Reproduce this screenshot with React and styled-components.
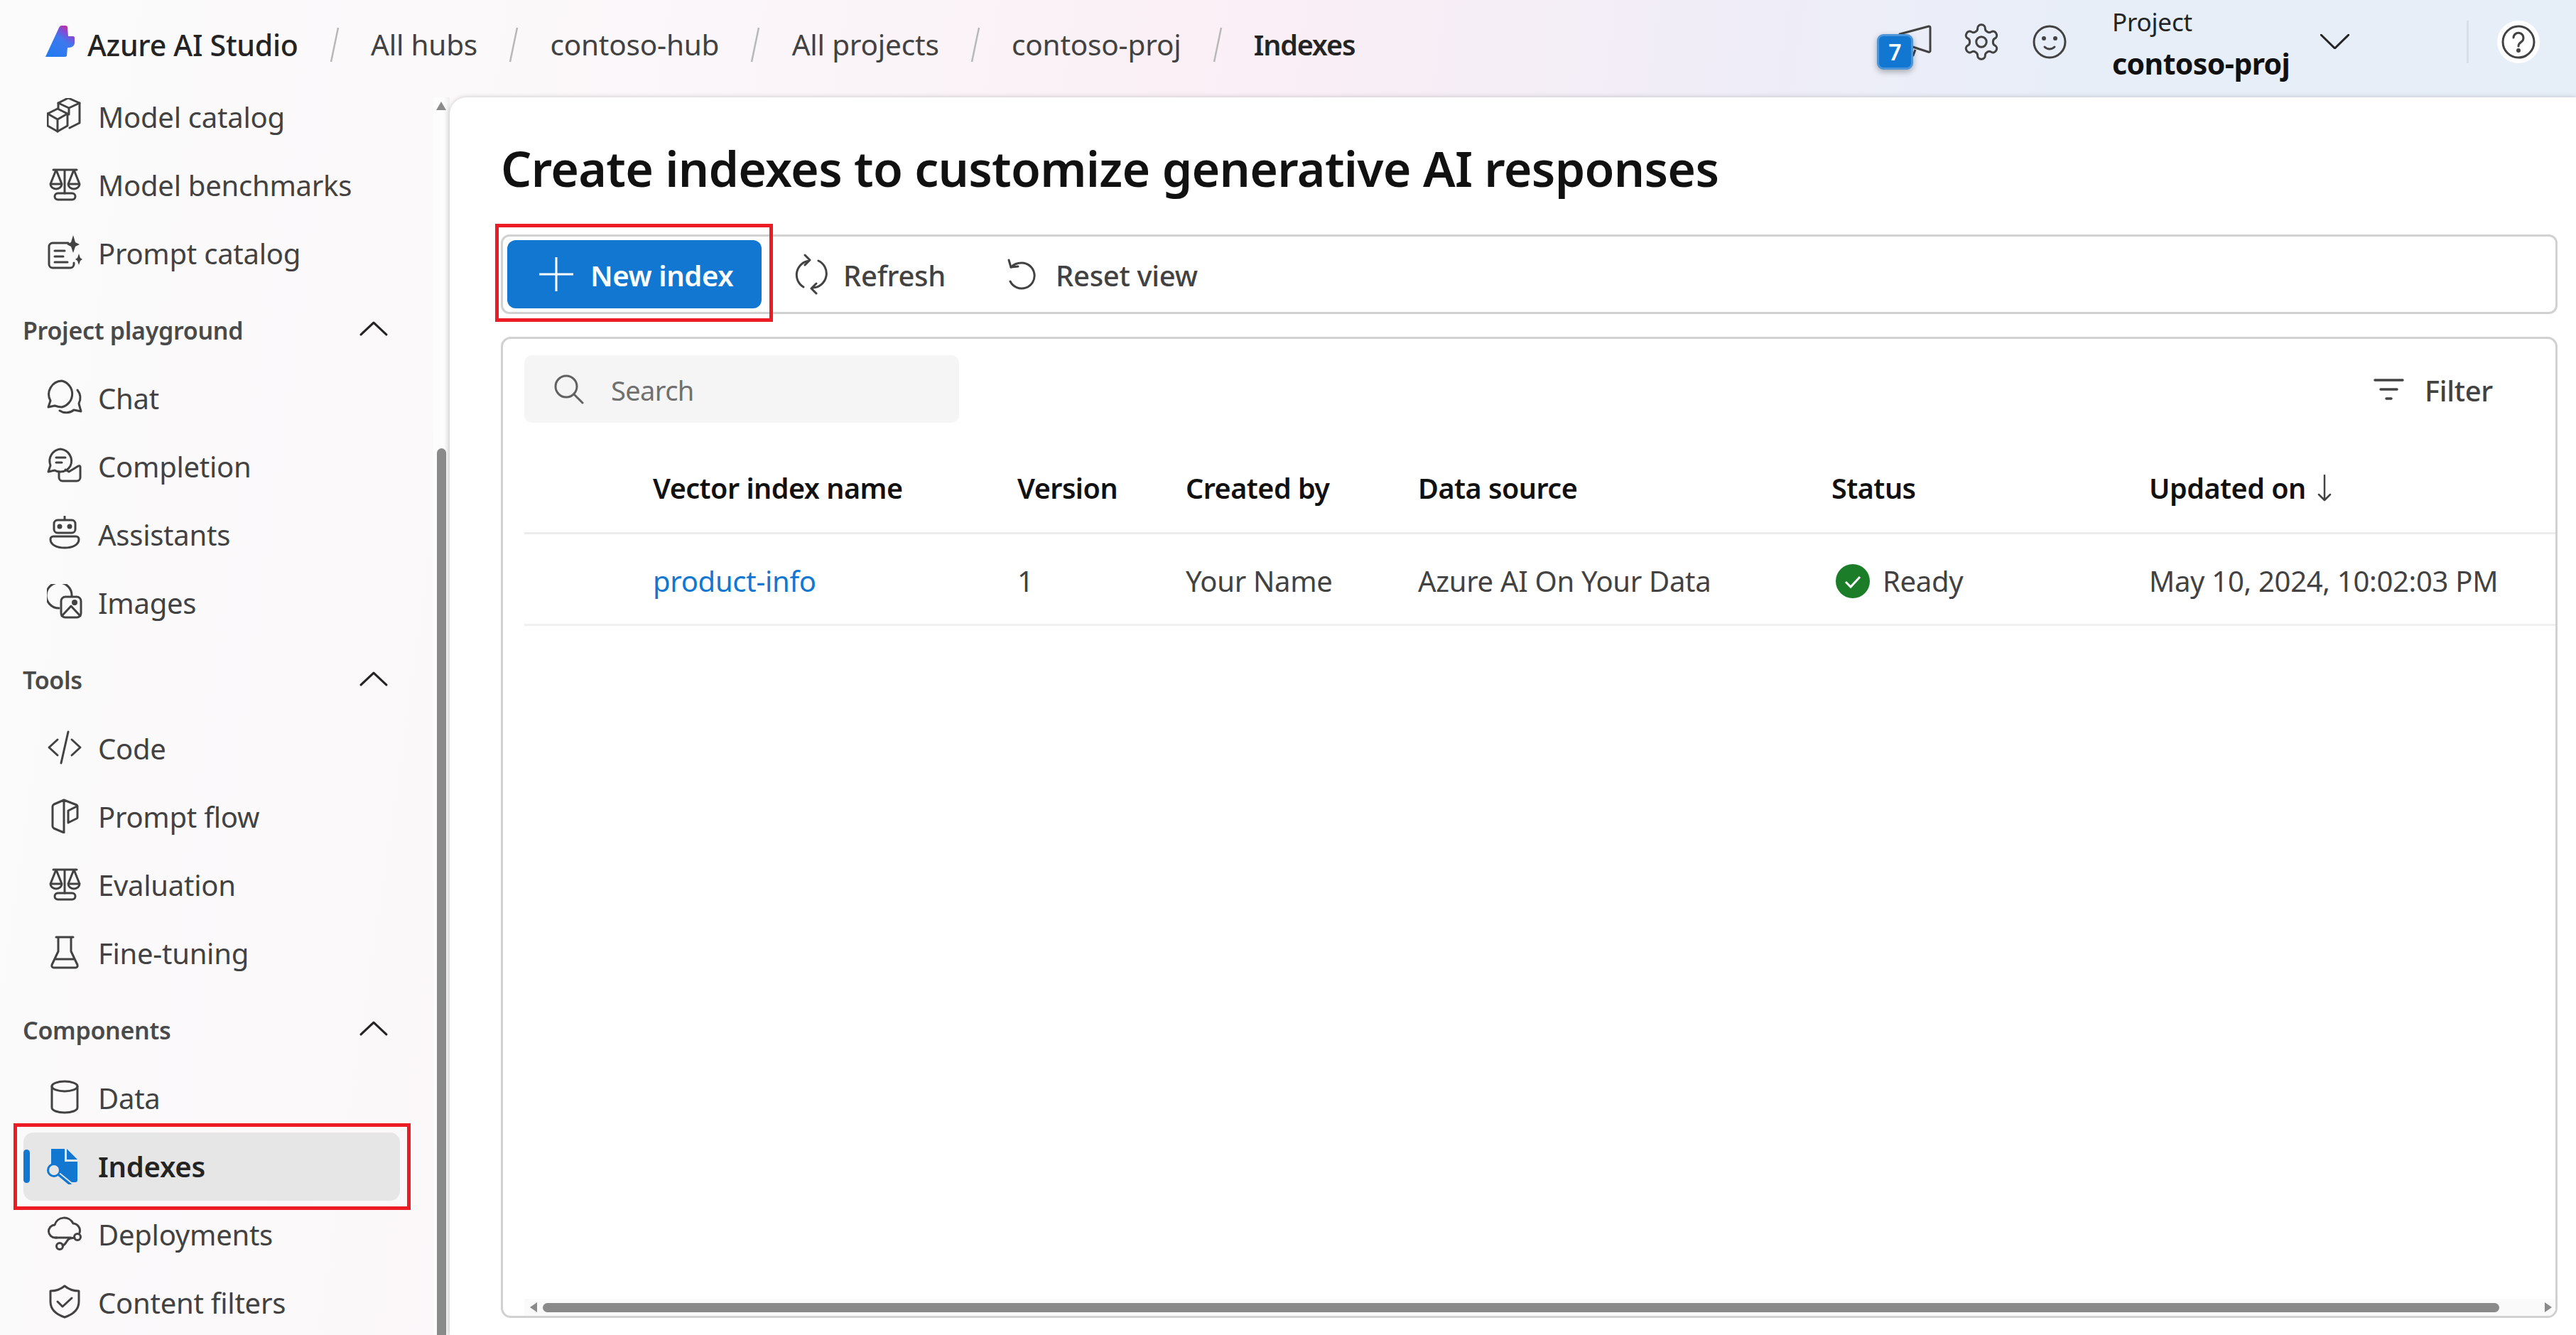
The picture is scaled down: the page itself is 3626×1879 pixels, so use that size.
import React from "react";
import styled, { createGlobalStyle } from "styled-components";

const Global = createGlobalStyle`
  html, body { margin: 0; padding: 0; height: 100%; overflow: hidden; }
  body { font-family: "Noto Sans", "Open Sans", sans-serif; color: #242424; }
  #root { height: 100%; }
  * { box-sizing: border-box; }
`;

const Page = styled.div`
  width: 3626px; height: 1879px; display: flex; flex-direction: column; overflow: hidden;
  background: linear-gradient(98deg, #fbfbfb 0%, #fbf8fa 20%, #f9eef5 48%, #f0edf7 62%, #e7eef8 76%, #e6eef8 100%);
`;
const Header = styled.header`
  height: 137px; flex: none; display: flex; align-items: center; padding: 0 51px 12px 63px;
`;
const Logo = styled.svg`width: 42px; height: 46px; margin: 0 18px 8px 0; flex: none;`;
const Brand = styled.span`font-size: 41px; font-weight: 500; color: #242424; letter-spacing: -.25px; white-space: nowrap;`;
const Slash = styled.svg`width: 16px; height: 50px; margin: 0 43.2px; flex: none;`;
const Crumb = styled.span`
  font-size: ${p => p.$current ? 39.5 : 40.5}px; font-weight: ${p => p.$current ? 600 : 400}; color: ${p => p.$current ? "#242424" : "#424242"};
  white-space: nowrap; letter-spacing: ${p => p.$current ? "-1.2px" : "-.2px"};
`;
const HeadTools = styled.div`margin-left: auto; display: flex; align-items: center; padding-bottom: 8px;`;
const Notify = styled.div`position: relative; width: 77px; height: 50px; margin-right: 39px; display: flex; justify-content: flex-end;`;
const Badge = styled.span`
  position: absolute; left: -2px; top: 14px; width: 51px; height: 50px; background: #1277d1;
  border: 3px solid #4d95d9; border-radius: 9px; color: #fff; font-size: 32px; font-weight: 600;
  display: flex; align-items: center; justify-content: center; box-shadow: 0 3px 8px rgba(0,0,0,.3);
`;
const ToolIcon = styled.span`display: flex; margin-right: ${p => p.$mr || 0}px; color: #424242;`;
const ProjectBlock = styled.div`display: flex; flex-direction: column; width: 293px; gap: 6px; margin-top: 6px;`;
const ProjectLabel = styled.span`font-size: 35px; color: #242424; line-height: 48px; letter-spacing: -.2px;`;
const ProjectName = styled.span`font-size: 41px; font-weight: 700; color: #111; line-height: 56px; letter-spacing: -.6px;`;
const Chevron = styled.svg`width: ${p => p.$w || 41}px; height: ${p => p.$h || 21}px; margin-bottom: ${p => p.$mb || 0}px; flex: none; fill: none; stroke: ${p => p.$c || "#242424"}; stroke-width: 3; stroke-linecap: round; stroke-linejoin: round;`;
const Divider = styled.span`width: 3px; height: 60px; background: #d8dfe8; margin: 0 40px 0 165px;`;
const HelpCircle = styled.span`width: 60px; height: 60px; border-radius: 50%; background: #fff; display: flex; align-items: center; justify-content: center; color: #424242;`;

const Body = styled.div`flex: 1; min-height: 0; display: flex;`;
const Side = styled.aside`width: 633px; flex: none; position: relative; overflow: hidden; display: flex;`;
const NavList = styled.nav`width: 577px; margin: -21px 0 0 33px; flex: none;`;
const NavRow = styled.div`
  position: relative; height: 96px; width: 530px; display: flex; align-items: center; padding-left: 33px; gap: 22px;
  border-radius: 14px; font-size: 40px; font-weight: ${p => p.$active ? 600 : 400};
  color: ${p => p.$active ? "#242424" : "#424242"}; background: ${p => p.$active ? "#e6e6e6" : "transparent"}; letter-spacing: -.25px;
`;
const ActiveBar = styled.span`position: absolute; left: 0; top: 24px; width: 9px; height: 47px; border-radius: 5px; background: #1277d1;`;
const NavIcon = styled.svg`width: 50px; height: 50px; flex: none; fill: none; stroke: #424242; stroke-width: 3; stroke-linecap: round; stroke-linejoin: round; margin-bottom: 3px;`;
const Section = styled.div`
  height: 96px; margin: 12.5px 0 0 -1px; width: 515px; display: flex; align-items: center; justify-content: space-between;
  font-size: 34px; font-weight: 600; color: #4a4a4a; letter-spacing: -.3px;
`;
const Highlight = styled.span`
  position: absolute; border: 5px solid #ed1c24; pointer-events: none; z-index: 3; top: ${p => p.$t}px; left: ${p => p.$l}px; right: ${p => p.$r}px; bottom: ${p => p.$b}px;
`;
const VScroll = styled.div`
  position: absolute; right: 0; top: 0; bottom: 0; width: 23px; padding-left: 5px; display: flex; flex-direction: column; background: linear-gradient(90deg, #fcfcfc 0%, #fdfdfd 60%, #eeeeee 100%);
`;
const ScrollUp = styled.span`width: 0; height: 0; margin-left: -1px; border-left: 7.500px solid transparent; border-right: 7.500px solid transparent; border-bottom: 12px solid #8a8a8a; margin-top: 6px; flex: none;`;
const VThumb = styled.span`width: 13px; flex: 1; margin-top: 476px; border-radius: 7px 7px 0 0; background: #8a8a8a;`;

const Main = styled.main`
  flex: 1; min-width: 0; background: #fff; border-top-left-radius: 24px; box-shadow: 0 0 7px rgba(0,0,0,.2);
  padding: 0 26px 24px 72px; display: flex; flex-direction: column; position: relative;
`;
const Title = styled.h1`margin: 0; height: 193px; padding-top: 60px; font-size: 68px; line-height: 80px; font-weight: 600; color: #111; letter-spacing: -.7px; white-space: nowrap;`;
const Toolbar = styled.div`
  height: 112px; flex: none; display: flex; align-items: center; padding-left: 6px; border: 3px solid #d1d1d1; border-radius: 12px;
`;
const Primary = styled.button`
  position: relative; width: 358px; height: 96px; border: 0; border-radius: 12px; background: #1277d1; color: #fff; font: inherit; font-size: 40px; font-weight: 600;
  display: flex; align-items: center; gap: 24px; padding: 0 0 0 45px; letter-spacing: -.4px; margin-right: 45px;
`;
const ToolBtn = styled.span`display: flex; align-items: center; gap: ${p => p.$gap}px; margin-right: ${p => p.$mr || 0}px; font-size: 40px; font-weight: 500; color: #424242; letter-spacing: -.3px;`;
const Label = styled.span`margin-top: ${p => p.$mt || 3}px;`;
const Card = styled.section`
  margin-top: 32px; flex: 1; min-height: 0; border: 3px solid #d1d1d1; border-radius: 14px; padding: 23px 0 0 30px; display: flex; flex-direction: column; position: relative; overflow: hidden;
`;
const FilterBar = styled.div`display: flex; align-items: center; justify-content: space-between; padding-right: 88px; height: 95px; flex: none;`;
const SearchBox = styled.div`width: 612px; height: 95px; background: #f5f5f5; border-radius: 11px; display: flex; align-items: center; padding-left: 42px; gap: 38px; font-size: 38px; color: #707070; letter-spacing: -.6px;`;
const FilterBtn = styled.span`display: flex; align-items: center; gap: 29px; font-size: 40px; font-weight: 500; color: #424242; letter-spacing: -.3px;`;
const GridRow = styled.div`
  display: grid; grid-template-columns: 181px 513px 237px 327px 582px 447px 1fr; align-items: center; flex: none;
  height: ${p => p.$h}px; padding-top: ${p => p.$pt}px; border-bottom: 3px solid ${p => p.$line}; font-size: 40px; letter-spacing: -.3px;
`;
const HeadCell = styled.span`grid-column: ${p => p.$col}; font-size: 39.500px; font-weight: 600; color: #111; white-space: nowrap; display: flex; align-items: center; gap: 16px; letter-spacing: -.5px;`;
const Cell = styled.span`grid-column: ${p => p.$col}; color: ${p => p.$link ? "#1277d1" : "#424242"}; white-space: nowrap; display: flex; align-items: center; gap: 18px;`;
const StatusDot = styled.svg`width: 48px; height: 48px; margin-left: 6px;`;
const HScroll = styled.div`
  position: absolute; left: 30px; right: 0; bottom: 0; height: 24px; background: #fafafa; display: flex; align-items: center; gap: 8px; padding: 0 5px 0 8px;
`;
const Arrow = styled.span`width: 0; height: 0; border-top: 7px solid transparent; border-bottom: 7px solid transparent; ${p => p.$right ? "border-left: 10px solid #8a8a8a; margin-left: 56px;" : "border-right: 10px solid #8a8a8a;"}`;
const HThumb = styled.span`flex: 1; height: 13px; border-radius: 7px; background: #8a8a8a;`;

const I = {
  catalog: <><path d="M16 14V7l14-7 16 7v28l-14 7" /><path d="M16 7l15 7 15-7M31 14v9" /><path d="M14 15l14 7v17l-14 8-14-8V22z" transform="translate(1 0)" /><path d="M1 22l14 8 14-8M15 30v17" /></>,
  scale: <><path d="M9 5h33M25 5v33M13 5L5 25a8 7 0 0 0 16 0L13 5zM38 5l-8 20a8 7 0 0 0 16 0L38 5zM5 25h16M30 25h16" /><rect x="11" y="38" width="29" height="9" rx="4.500" /></>,
  prompt: <><path d="M30 12H8a5 5 0 0 0-5 5v25a5 5 0 0 0 5 5h25a5 5 0 0 0 5-5v-2" /><path d="M11 23h14M11 31h12M11 39h18" /><path d="M37 1l3 10 6 3-6 3-3 9-3-9-6-3 6-3zM45 27l2 6 3 2-3 2-2 6-2-6-3-2 3-2z" fill="#424242" stroke="none" /></>,
  chat: <><path d="M21 2a19 19 0 0 1 0 37c-4 0-7-1-10-2l-9 2 3-9A19 19 0 0 1 21 2z" /><path d="M43 15a17 17 0 0 1 2 19l3 11-10-2a17 17 0 0 1-20 1" /></>,
  completion: <><path d="M19 2a17 17 0 0 1 14 24c-3 5-8 8-14 8-3 0-5 0-8-2l-9 2 3-9A17 17 0 0 1 19 2z" /><path d="M13 14h13M13 21h8" /><path d="M17 34v8a5 5 0 0 0 5 5h20a5 5 0 0 0 5-5V27a2 2 0 0 0-3-1l-13 8-5-3" /></>,
  assistant: <><path d="M25 1v4" /><rect x="10" y="6" width="30" height="18" rx="5" /><circle cx="18" cy="15" r="2" fill="#424242" /><circle cx="32" cy="15" r="2" fill="#424242" /><path d="M9 29h32a4 4 0 0 1 4 4c0 8-9 12-20 12S5 41 5 33a4 4 0 0 1 4-4z" /></>,
  images: <><path d="M35 17A18 18 0 1 0 17 34" /><rect x="20" y="18" width="28" height="29" rx="6" /><path d="M21 45l13-14 13 14" /><circle cx="39" cy="26" r="2.500" fill="#424242" /></>,
  code: <><path d="M15 14L3 25l12 11M35 14l12 11-12 11M30 3L20 47" /></>,
  flow: <><path d="M24 3L10 9a4 4 0 0 0-2 4v26a4 4 0 0 0 2 4l14 6zM24 3l18 7a2 2 0 0 1 1 2v15a2 2 0 0 1-1 2l-12 6V18l12-6" /></>,
  flask: <><path d="M13 4h24M16 4v20L7 43a3 3 0 0 0 3 4h30a3 3 0 0 0 3-4L34 24V4M11 35h28" /></>,
  data: <><ellipse cx="25" cy="10" rx="18" ry="7" /><path d="M7 10v30c0 4 8 7 18 7s18-3 18-7V10" /></>,
  deploy: <><path d="M14 31H12a9 9 0 0 1-1-18 14 14 0 0 1 26-2 10 10 0 0 1 9 13" /><path d="M12 31h22" /><circle cx="18" cy="43" r="4.500" /><circle cx="43" cy="30" r="4.500" /><path d="M22 42c6-1 5-9 11-10l6-1" /></>,
  shield: <><path d="M25 3c6 5 12 7 20 7v15c0 11-8 18-20 22C13 43 5 36 5 25V10c8 0 14-2 20-7z" /><path d="M15 25l7 7 13-12" /></>,
};

const NavItem = ({ icon, label }) => (
  <NavRow><NavIcon viewBox="0 0 50 50">{I[icon]}</NavIcon>{label}</NavRow>
);
const SectionHead = ({ label }) => (
  <Section>{label}<Chevron $mb={4} viewBox="0 0 37 20"><path d="M1 18L18 2l17 16" /></Chevron></Section>
);
const Sep = () => <Slash viewBox="0 0 16 50"><path d="M13 1L3 49" stroke="#b8b8b8" strokeWidth="2.500" fill="none" /></Slash>;

export default function App() {
  return (
    <Page>
      <Global />
      <Header>
        <Logo viewBox="0 0 42 46">
          <defs>
            <linearGradient id="lg" x1="0.1" y1="1" x2="0.75" y2="0">
              <stop offset="0" stopColor="#1f7cf0" />
              <stop offset=".6" stopColor="#3f78ee" />
              <stop offset=".8" stopColor="#7a50d8" />
              <stop offset="1" stopColor="#c92a94" />
            </linearGradient>
          </defs>
          <path d="M1 44L20 3c1-2 2-3 4-3h5c2 0 3 1 3 3l1 12h7c1 0 2 1 2 2v7c0 4-3 7-8 7h-2l-1 11c0 1-1 2-3 2H2c-1 0-2-1-1-2z" fill="url(#lg)" />
        </Logo>
        <Brand>Azure AI Studio</Brand>
        <Sep /><Crumb>All hubs</Crumb>
        <Sep /><Crumb>contoso-hub</Crumb>
        <Sep /><Crumb>All projects</Crumb>
        <Sep /><Crumb>contoso-proj</Crumb>
        <Sep /><Crumb $current>Indexes</Crumb>
        <HeadTools>
          <Notify>
            <svg width="50" height="50" viewBox="0 0 50 50" fill="none" stroke="#424242" strokeWidth="3" strokeLinejoin="round">
              <path d="M3 14L44 3a2 2 0 0 1 2 2v33a2 2 0 0 1-3 1L3 26zM16 32l-3 9 9 3 3-8" />
            </svg>
            <Badge>7</Badge>
          </Notify>
          <ToolIcon $mr={42}>
            <svg width="58" height="58" viewBox="0 0 24 24" fill="none" stroke="currentColor" strokeWidth="1.250" strokeLinejoin="round"><path d="M12.200 2h-.4a2 2 0 0 0-2 2v.2a2 2 0 0 1-1 1.700l-.4.3a2 2 0 0 1-2 0l-.2-.1a2 2 0 0 0-2.700.7l-.2.4a2 2 0 0 0 .7 2.700l.2.1a2 2 0 0 1 1 1.700v.5a2 2 0 0 1-1 1.800l-.2.1a2 2 0 0 0-.7 2.700l.2.4a2 2 0 0 0 2.700.7l.2-.1a2 2 0 0 1 2 0l.4.3a2 2 0 0 1 1 1.700v.2a2 2 0 0 0 2 2h.4a2 2 0 0 0 2-2v-.2a2 2 0 0 1 1-1.700l.4-.3a2 2 0 0 1 2 0l.2.1a2 2 0 0 0 2.700-.7l.2-.4a2 2 0 0 0-.7-2.700l-.2-.1a2 2 0 0 1-1-1.800v-.5a2 2 0 0 1 1-1.700l.2-.1a2 2 0 0 0 .7-2.700l-.2-.4a2 2 0 0 0-2.700-.7l-.2.1a2 2 0 0 1-2 0l-.4-.3a2 2 0 0 1-1-1.700V4a2 2 0 0 0-2-2z" /><circle cx="12" cy="12" r="3" /></svg>
          </ToolIcon>
          <ToolIcon $mr={63}>
            <svg width="50" height="50" viewBox="0 0 50 50" fill="none" stroke="currentColor" strokeWidth="3" strokeLinecap="round"><circle cx="25" cy="25" r="22" /><circle cx="17" cy="20" r="1.500" fill="currentColor" /><circle cx="33" cy="20" r="1.500" fill="currentColor" /><path d="M18 32c4 4 10 4 14 0" /></svg>
          </ToolIcon>
          <ProjectBlock>
            <ProjectLabel>Project</ProjectLabel>
            <ProjectName>contoso-proj</ProjectName>
          </ProjectBlock>
          <Chevron viewBox="0 0 41 21"><path d="M1 1l19.500 19L40 1" /></Chevron>
          <Divider />
          <HelpCircle>
            <svg width="50" height="50" viewBox="0 0 50 50" fill="none" stroke="currentColor" strokeWidth="3" strokeLinecap="round"><circle cx="25" cy="25" r="22" /><path d="M18 19a7 7 0 1 1 11 6c-3 2-4 3-4 6" /><circle cx="25" cy="37" r="1.500" fill="currentColor" /></svg>
          </HelpCircle>
        </HeadTools>
      </Header>
      <Body>
        <Side>
          <NavList>
            <NavItem icon="catalog" label="Model catalog" />
            <NavItem icon="scale" label="Model benchmarks" />
            <NavItem icon="prompt" label="Prompt catalog" />
            <SectionHead label="Project playground" />
            <NavItem icon="chat" label="Chat" />
            <NavItem icon="completion" label="Completion" />
            <NavItem icon="assistant" label="Assistants" />
            <NavItem icon="images" label="Images" />
            <SectionHead label="Tools" />
            <NavItem icon="code" label="Code" />
            <NavItem icon="flow" label="Prompt flow" />
            <NavItem icon="scale" label="Evaluation" />
            <NavItem icon="flask" label="Fine-tuning" />
            <SectionHead label="Components" />
            <NavItem icon="data" label="Data" />
            <NavRow $active>
              <ActiveBar />
              <Highlight $t={-13} $l={-14} $r={-15} $b={-13} />
              <svg width="50" height="50" viewBox="0 0 50 50" style={{ flex: "none" }}>
                <path d="M6 0h19v18h18v26a3 3 0 0 1-3 3H28L17 36a11 11 0 0 0-11-10z" fill="#1277d1" />
                <path d="M28 0l15 15H28z" fill="#1277d1" />
                <circle cx="10" cy="30" r="8.500" fill="#e6e6e6" stroke="#1277d1" strokeWidth="3" />
                <path d="M16.500 36.500L33 50" stroke="#e6e6e6" strokeWidth="7" />
                <path d="M16.500 36.500L33 50" stroke="#1277d1" strokeWidth="3.500" strokeLinecap="round" />
              </svg>
              Indexes
            </NavRow>
            <NavItem icon="deploy" label="Deployments" />
            <NavItem icon="shield" label="Content filters" />
          </NavList>
          <VScroll>
            <ScrollUp />
            <VThumb />
          </VScroll>
        </Side>
        <Main>
          <Title>Create indexes to customize generative AI responses</Title>
          <Toolbar>
            <Primary>
              <Highlight $t={-23} $l={-17} $r={-16} $b={-19} />
              <svg width="48" height="48" viewBox="0 0 48 48" stroke="#fff" strokeWidth="3"><path d="M24 0v48M0 24h48" /></svg>
              <Label>New index</Label>
            </Primary>
            <ToolBtn $gap={22} $mr={85}>
              <svg width="48" height="58" viewBox="0 0 48 58" fill="none" stroke="#424242" strokeWidth="3" strokeLinecap="round" strokeLinejoin="round">
                <path d="M22 10A20 20 0 0 0 14 47M27 48a20 20 0 0 0 8-38M16 2l7 7-7 7M32 42l-7 7 7 7" />
              </svg>
              <Label>Refresh</Label>
            </ToolBtn>
            <ToolBtn $gap={26}>
              <svg width="44" height="44" viewBox="0 0 44 44" fill="none" stroke="#424242" strokeWidth="3" strokeLinecap="round" strokeLinejoin="round">
                <path d="M5 12c4-4 9-6 15-6a18 18 0 1 1-16 26" transform="translate(2 0)" /><path d="M4 2l3 10 10-1" />
              </svg>
              <Label>Reset view</Label>
            </ToolBtn>
          </Toolbar>
          <Card>
            <FilterBar>
              <SearchBox>
                <svg width="42" height="42" viewBox="0 0 42 42" fill="none" stroke="#616161" strokeWidth="3" strokeLinecap="round"><circle cx="17" cy="17" r="15" /><path d="M28 28l12 12" /></svg>
                <Label>Search</Label>
              </SearchBox>
              <FilterBtn>
                <svg width="43" height="30" viewBox="0 0 43 30" fill="none" stroke="#424242" strokeWidth="3.500" strokeLinecap="round"><path d="M2 2h39M10 15h23M18 28h7" /></svg>
                <Label>Filter</Label>
              </FilterBtn>
            </FilterBar>
            <GridRow $h={157} $pt={30} $line="#ebebeb">
              <HeadCell $col={2}>Vector index name</HeadCell>
              <HeadCell $col={3}>Version</HeadCell>
              <HeadCell $col={4}>Created by</HeadCell>
              <HeadCell $col={5}>Data source</HeadCell>
              <HeadCell $col={6}>Status</HeadCell>
              <HeadCell $col={7}>Updated on
                <svg width="20" height="38" viewBox="0 0 20 38" fill="none" stroke="#424242" strokeWidth="2.500" strokeLinecap="round" strokeLinejoin="round"><path d="M10 1v35M2 28l8 8 8-8" /></svg>
              </HeadCell>
            </GridRow>
            <GridRow $h={129} $pt={5} $line="#f0f0f0">
              <Cell $col={2} $link>product-info</Cell>
              <Cell $col={3}>1</Cell>
              <Cell $col={4}>Your Name</Cell>
              <Cell $col={5}>Azure AI On Your Data</Cell>
              <Cell $col={6}>
                <StatusDot viewBox="0 0 48 48"><circle cx="24" cy="24" r="24" fill="#1b7d28" /><path d="M14 25l7 7 13-14" fill="none" stroke="#fff" strokeWidth="3" /></StatusDot>
                Ready
              </Cell>
              <Cell $col={7}>May 10, 2024, 10:02:03 PM</Cell>
            </GridRow>
            <HScroll>
              <Arrow />
              <HThumb />
              <Arrow $right />
            </HScroll>
          </Card>
        </Main>
      </Body>
    </Page>
  );
}
